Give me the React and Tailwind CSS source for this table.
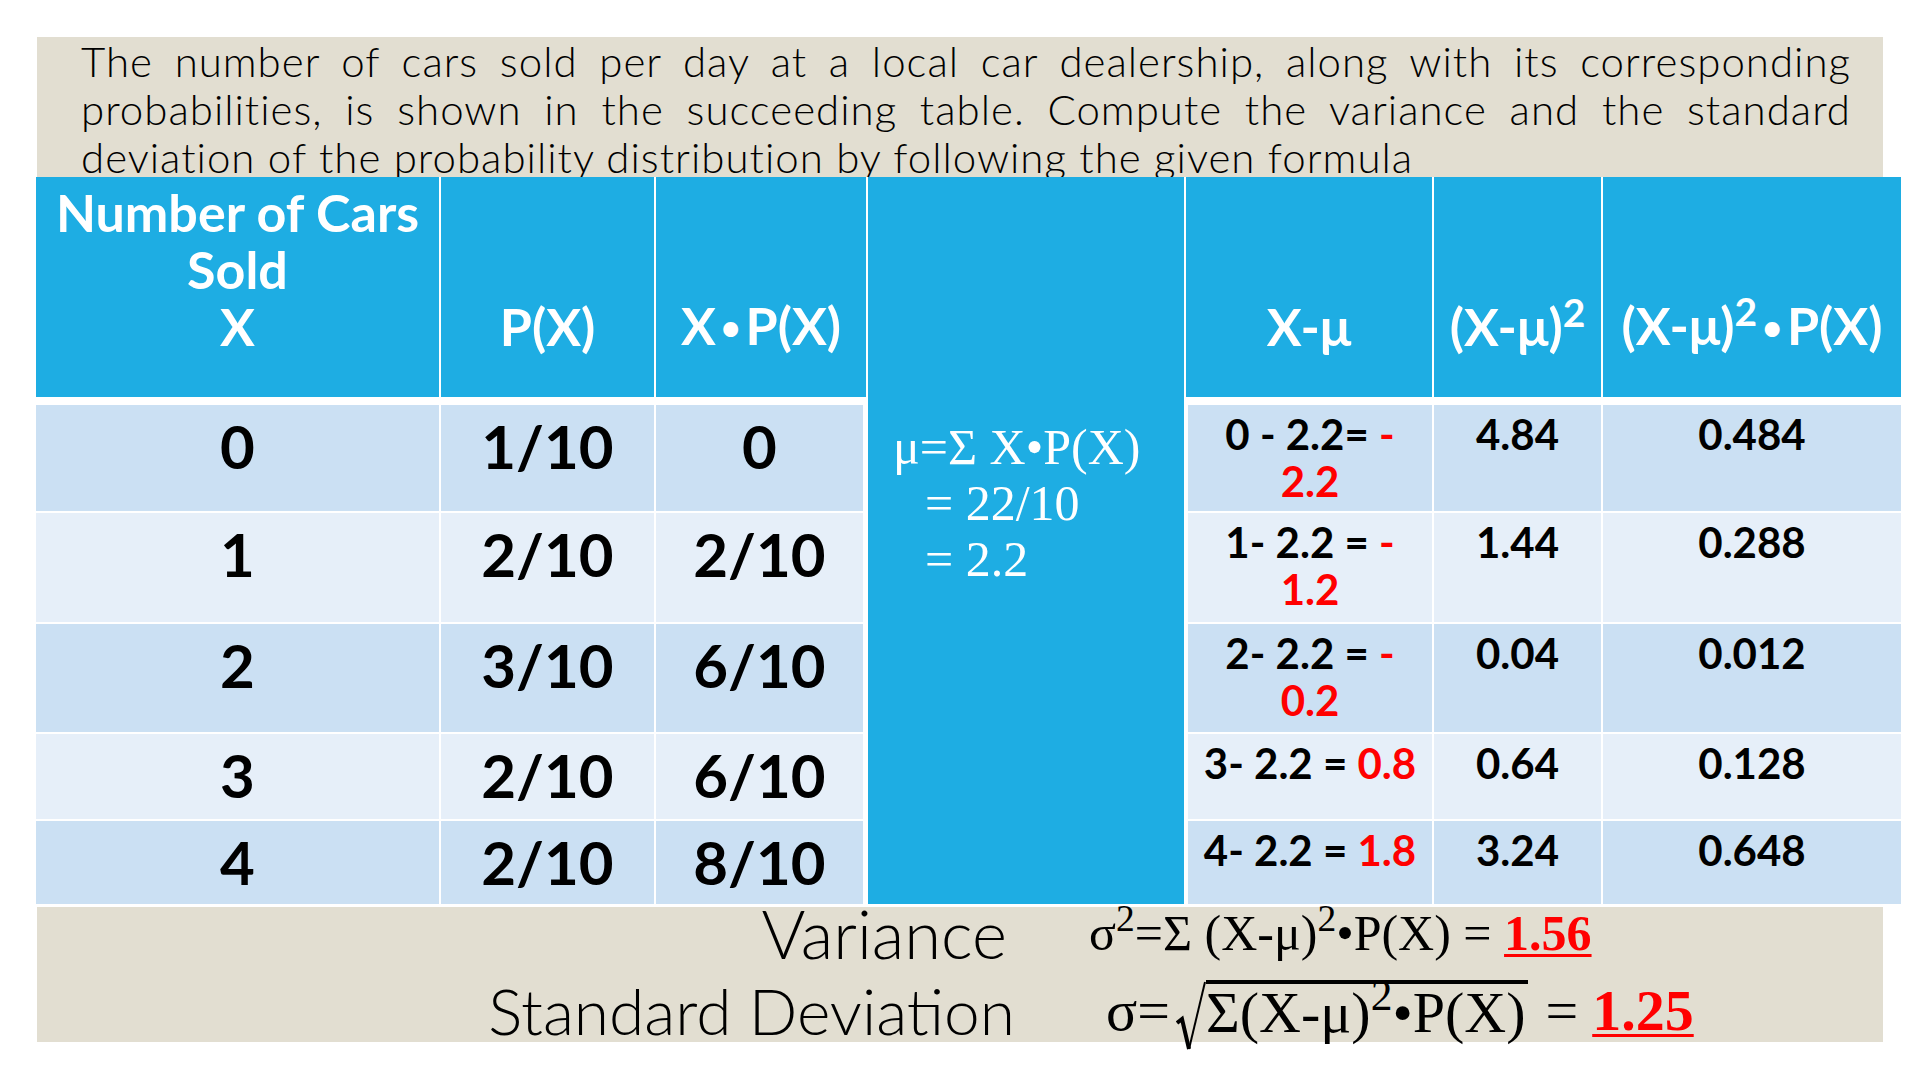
const rows = [
  { x: '0', p: '1/10', xp: '0', d: [['0 - 2.2= ', '-'], ['', '2.2']], sq: '4.84', sqp: '0.484', dark: true },
  { x: '1', p: '2/10', xp: '2/10', d: [['1- 2.2 = ', '-'], ['', '1.2']], sq: '1.44', sqp: '0.288', dark: false },
  { x: '2', p: '3/10', xp: '6/10', d: [['2- 2.2 = ', '-'], ['', '0.2']], sq: '0.04', sqp: '0.012', dark: true },
  { x: '3', p: '2/10', xp: '6/10', d: [['3- 2.2 = ', '0.8']], sq: '0.64', sqp: '0.128', dark: false },
  { x: '4', p: '2/10', xp: '8/10', d: [['4- 2.2 = ', '1.8']], sq: '3.24', sqp: '0.648', dark: true },
]

function HeadCell({ children }) {
  return (
    <div className="mb-[6px] bg-[#1eade3] flex flex-col justify-end items-center pb-[42px] text-white font-bold text-[52px] leading-[57px] text-center whitespace-nowrap">
      {children}
    </div>
  )
}

function Dot() {
  return <span className="text-[34px] mx-[5px] align-[5px]">•</span>
}

function Radical() {
  return (
    <svg width="30" height="70" viewBox="0 0 30 70" className="mt-[10px] shrink-0">
      <path d="M1 42 L6 38 L13 68" fill="none" stroke="black" strokeWidth="4" />
      <path d="M13 68 L29 1" fill="none" stroke="black" strokeWidth="2" />
    </svg>
  )
}

export default function App() {
  return (
    <div className="w-[1920px] h-[1080px] bg-white overflow-hidden pt-[37px] pl-[37px] font-['Lato',sans-serif]">
      <div className="w-[1846px] h-[1005px] bg-[#e2ded1] flex flex-col">
        {/* question text, last line runs under the table like the slide */}
        <div className="h-[140px] pl-[44px] pr-[32px] text-[42px] leading-[48px] tracking-[1px] font-light text-black">
          <div className="text-justify [text-align-last:justify]">
            The number of cars sold per day at a local car dealership, along with its corresponding
          </div>
          <div className="text-justify [text-align-last:justify]">
            probabilities, is shown in the succeeding table. Compute the variance and the standard
          </div>
          <div className="whitespace-nowrap">deviation of the probability distribution by following the given formula</div>
        </div>

        {/* table */}
        <div className="relative -ml-px w-[1865px] bg-white pb-[3px] grid grid-cols-[403px_213px_210px_316px_246px_167px_298px] grid-rows-[226px_106px_109px_108px_85px_83px] gap-[2px]">
          <div className="col-start-4 row-start-1 row-span-6 bg-[#1eade3] pl-[25px] pt-[242px] font-['Liberation_Serif',serif] text-[50px] leading-[56px] text-white whitespace-nowrap">
            <div>μ=Σ X•P(X)</div>
            <div className="pl-[32px]">= 22/10</div>
            <div className="pl-[32px]">= 2.2</div>
          </div>

          <HeadCell>
            <div>Number of Cars</div>
            <div>Sold</div>
            <div>X</div>
          </HeadCell>
          <HeadCell>P(X)</HeadCell>
          <HeadCell>
            <div>X<Dot />P(X)</div>
          </HeadCell>
          <HeadCell>X-μ</HeadCell>
          <HeadCell>
            <div>(X-μ)<sup>2</sup></div>
          </HeadCell>
          <HeadCell>
            <div>(X-μ)<sup>2</sup><Dot />P(X)</div>
          </HeadCell>

          {rows.map((r, i) => {
            const bg = r.dark ? 'bg-[#cbe0f3]' : 'bg-[#e6eff9]'
            const big = `${bg} text-center pt-[5px] font-bold text-[60px] leading-[72px] text-black`
            const small = `${bg} text-center pt-[6px] font-bold text-[42px] leading-[47px] text-black whitespace-nowrap`
            return [
              <div key={`a${i}`} className={big}>{r.x}</div>,
              <div key={`b${i}`} className={big}>{r.p}</div>,
              <div key={`c${i}`} className={`${big} border-r-[3px] border-white`}>{r.xp}</div>,
              <div key={`d${i}`} className={`${small} border-l-[2px] border-white`}>
                {r.d.map((line, j) => (
                  <div key={j}>
                    {line[0]}
                    <span className="text-[#ff0000]">{line[1]}</span>
                  </div>
                ))}
              </div>,
              <div key={`e${i}`} className={small}>{r.sq}</div>,
              <div key={`f${i}`} className={small}>{r.sqp}</div>,
            ]
          })}
        </div>

        {/* variance and standard deviation */}
        <div className="h-[135px] flex flex-col text-black">
          <div className="h-[52px] flex items-center">
            <div className="w-[970px] text-right font-light text-[67px] leading-none">Variance</div>
            <div className="ml-[82px] font-['Liberation_Serif',serif] text-[50px] leading-none whitespace-nowrap">
              σ<sup>2</sup>=Σ (X-μ)<sup>2</sup>•P(X) ={' '}
              <span className="font-bold text-[#ff0000] underline decoration-[3px] underline-offset-[4px]">1.56</span>
            </div>
          </div>
          <div className="h-[52px] mt-[26px] flex items-center">
            <div className="w-[978px] text-right font-light text-[64px] leading-none">Standard Deviation</div>
            <div className="ml-[91px] flex items-center font-['Liberation_Serif',serif] text-[58px] leading-none whitespace-nowrap">
              <span className="mr-[6px]">σ=</span>
              <Radical />
              <span className="border-t-[4px] border-black pr-[2px]">
                Σ(X-μ)<sup>2</sup>•P(X)
              </span>
              <span className="ml-[18px]">=</span>
              <span className="ml-[14px] font-bold text-[#ff0000] underline decoration-[3px] underline-offset-[4px]">1.25</span>
            </div>
          </div>
        </div>
      </div>
    </div>
  )
}
